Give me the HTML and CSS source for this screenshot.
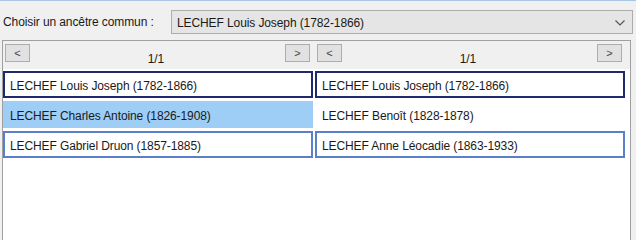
FILE: index.html
```html
<!DOCTYPE html>
<html>
<head>
    <title>Ancêtre commun</title>
    <link rel="stylesheet" href="styles.css">
</head>
<body>
    <div class="topbar">
        <span class="label">Choisir un ancêtre commun :</span>
        <div class="combo">
            <span>LECHEF Louis Joseph (1782-1866)</span>
            <svg class="chevron" width="10" height="6" viewBox="0 0 10 6">
                <polyline points="0.5,0.5 5,5 9.5,0.5" fill="none" stroke="#555" stroke-width="1.2"/>
            </svg>
        </div>
    </div>

    <div class="panel">
        <div class="pagers">
            <div class="pager">
                <button class="nav">&lt;</button>
                <span class="count">1/1</span>
                <button class="nav">&gt;</button>
            </div>
            <div class="pager">
                <button class="nav">&lt;</button>
                <span class="count">1/1</span>
                <button class="nav">&gt;</button>
            </div>
        </div>

        <div class="lists">
            <div class="list">
                <div class="person root">LECHEF Louis Joseph (1782-1866)</div>
                <div class="person selected">LECHEF Charles Antoine (1826-1908)</div>
                <div class="person target">LECHEF Gabriel Druon (1857-1885)</div>
            </div>
            <div class="list">
                <div class="person root">LECHEF Louis Joseph (1782-1866)</div>
                <div class="person">LECHEF Benoît (1828-1878)</div>
                <div class="person target">LECHEF Anne Léocadie (1863-1933)</div>
            </div>
        </div>
    </div>
</body>
</html>
```

FILE: styles.css
```css
body {
    margin: 0;
    background: #f0f0f0;
    font-family: "Liberation Sans", Arial, sans-serif;
    font-size: 12px;
    letter-spacing: -0.1px;
    color: #1a1a1a;
    height: 240px;
    overflow: hidden;
}

.topbar {
    display: flex;
    align-items: center;
    height: 39px;
    border-top: 1px solid #a9c6e8;
    padding-left: 3px;
}

.label {
    width: 168px;
    padding-top: 2px;
}

.combo {
    display: flex;
    align-items: center;
    justify-content: space-between;
    box-sizing: border-box;
    width: 462px;
    height: 24px;
    margin-top: 3px;
    padding: 1px 7px 0 5px;
    background: #e5e5e5;
    border: 1px solid #adadad;
}

.panel {
    box-sizing: border-box;
    width: 629px;
    height: 200px;
    margin-left: 2px;
    border: 1px solid #a0a0a0;
    border-bottom: none;
    background: #fff;
}

.pagers {
    display: flex;
    gap: 2px;
    height: 28px;
    background: #f0f0f0;
}

.pager {
    display: flex;
    align-items: flex-start;
    justify-content: space-between;
    box-sizing: border-box;
    width: 310px;
    padding: 3px 3px 0 2px;
}

.nav {
    width: 25px;
    height: 18px;
    padding: 0;
    background: #e1e1e1;
    border: 1px solid #adadad;
    color: #444;
    font-family: "Liberation Sans", Arial, sans-serif;
    font-size: 11px;
    line-height: 14px;
}

.count {
    padding-top: 8px;
    padding-right: 3px;
}

.lists {
    display: flex;
    gap: 2px;
    padding-top: 2px;
}

.list {
    display: flex;
    flex-direction: column;
    gap: 3px;
    width: 310px;
}

.person {
    box-sizing: border-box;
    height: 27px;
    padding: 6px 5px 0;
    border: 2px solid transparent;
    background: #fff;
}

.person.root {
    border-color: #1e2a6c;
}

.person.selected {
    background: #9ecdf6;
    border-color: #9ecdf6;
}

.person.target {
    border-color: #5a7fcb;
}
```
